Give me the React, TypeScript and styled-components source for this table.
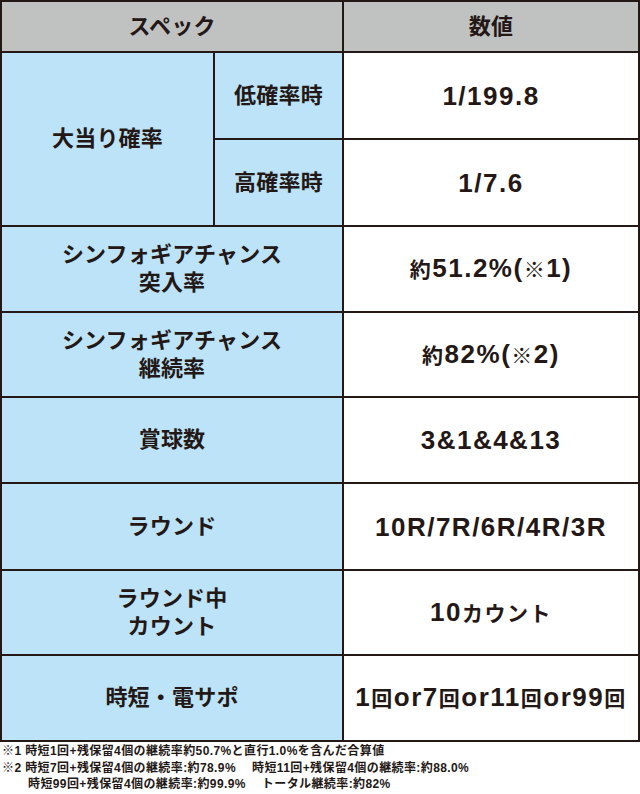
import React from 'react';
import styled, { createGlobalStyle } from 'styled-components';

const GlobalStyle = createGlobalStyle`
  body {
    margin: 0;
    background: #fff;
    font-family: "Liberation Sans", "Noto Sans CJK JP", sans-serif;
    color: #231815;
  }
`;

const Page = styled.div`
  width: 640px;
`;

const SpecTable = styled.table`
  width: 640px;
  border-collapse: collapse;
  table-layout: fixed;
`;

const Row = styled.tr<{ $h: number }>`
  height: ${({ $h }) => $h}px;
`;

const Cell = styled.td<{ $kind: 'head' | 'label' | 'value' }>`
  border: 2px solid #231815;
  padding: 0;
  text-align: center;
  vertical-align: middle;
  font-weight: 700;
  white-space: nowrap;
  background: ${({ $kind }) =>
    $kind === 'head' ? '#c0c1c1' : $kind === 'label' ? '#bce3f7' : '#fff'};
  font-size: ${({ $kind }) => ($kind === 'value' ? '26px' : '22px')};
  letter-spacing: ${({ $kind }) => ($kind === 'value' ? '1.5px' : '0.2px')};
  line-height: 28px;
`;

const Kana = styled.span`
  font-size: 21px;
`;

const Notes = styled.div`
  padding: 1px 0 0 2px;
  font-size: 12px;
  font-weight: 700;
  line-height: 16.5px;
  letter-spacing: 0.4px;
  color: #231815;
`;

const NoteLine = styled.div<{ $indent?: boolean }>`
  padding-left: ${({ $indent }) => ($indent ? '26px' : '0')};
  white-space: nowrap;
`;

const Gap = styled.span`
  display: inline-block;
  width: 16px;
`;

// split into latin / japanese runs so the japanese can sit a bit smaller
function mixed(text: string) {
  const parts = text.match(/[\u3000-\u9fff\u203b]+|[^\u3000-\u9fff\u203b]+/g) || [];
  return parts.map((p, i) =>
    /[\u3000-\u9fff\u203b]/.test(p) ? <Kana key={i}>{p}</Kana> : <React.Fragment key={i}>{p}</React.Fragment>
  );
}

const rows: { label: React.ReactNode; value: string; h: number }[] = [
  { label: <>シンフォギアチャンス<br />突入率</>, value: '約51.2%(※1)', h: 86 },
  { label: <>シンフォギアチャンス<br />継続率</>, value: '約82%(※2)', h: 85 },
  { label: '賞球数', value: '3&1&4&13', h: 86 },
  { label: 'ラウンド', value: '10R/7R/6R/4R/3R', h: 87 },
  { label: <>ラウンド中<br />カウント</>, value: '10カウント', h: 85 },
  { label: '時短・電サポ', value: '1回or7回or11回or99回', h: 86 },
];

export default function App() {
  return (
    <Page>
      <GlobalStyle />
      <SpecTable>
        <colgroup>
          <col style={{ width: 213 }} />
          <col style={{ width: 129 }} />
          <col />
        </colgroup>
        <tbody>
          <Row $h={51}>
            <Cell $kind="head" colSpan={2}>スペック</Cell>
            <Cell $kind="head">数値</Cell>
          </Row>
          <Row $h={87}>
            <Cell $kind="label" rowSpan={2}>大当り確率</Cell>
            <Cell $kind="label">低確率時</Cell>
            <Cell $kind="value">1/199.8</Cell>
          </Row>
          <Row $h={87}>
            <Cell $kind="label">高確率時</Cell>
            <Cell $kind="value">1/7.6</Cell>
          </Row>
          {rows.map((r, i) => (
            <Row $h={r.h} key={i}>
              <Cell $kind="label" colSpan={2}>{r.label}</Cell>
              <Cell $kind="value">{mixed(r.value)}</Cell>
            </Row>
          ))}
        </tbody>
      </SpecTable>
      <Notes>
        <NoteLine>※1 時短1回+残保留4個の継続率約50.7%と直行1.0%を含んだ合算値</NoteLine>
        <NoteLine>※2 時短7回+残保留4個の継続率:約78.9%<Gap />時短11回+残保留4個の継続率:約88.0%</NoteLine>
        <NoteLine $indent>時短99回+残保留4個の継続率:約99.9%<Gap />トータル継続率:約82%</NoteLine>
      </Notes>
    </Page>
  );
}
